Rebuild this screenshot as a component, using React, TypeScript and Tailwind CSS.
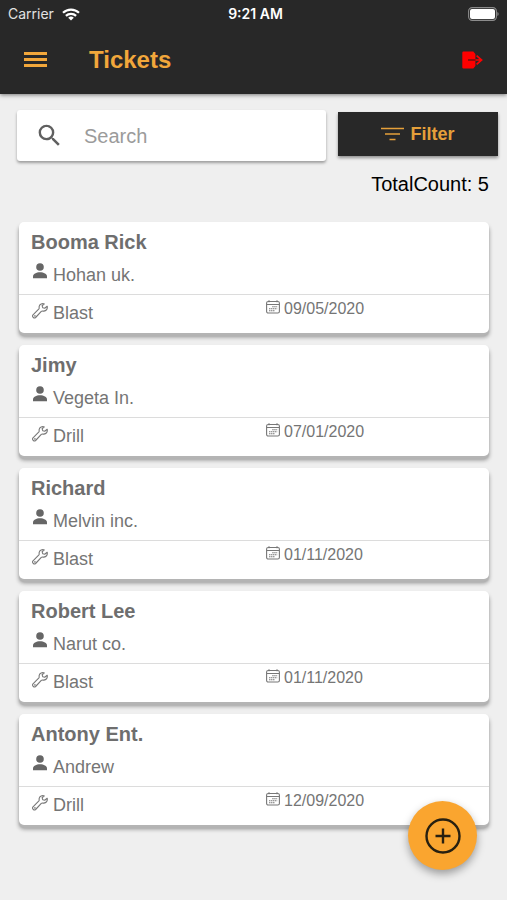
import { MdSearch } from "react-icons/md";

type Ticket = { name: string; company: string; kind: string; date: string };

const tickets: Ticket[] = [
  { name: "Booma Rick", company: "Hohan uk.", kind: "Blast", date: "09/05/2020" },
  { name: "Jimy", company: "Vegeta In.", kind: "Drill", date: "07/01/2020" },
  { name: "Richard", company: "Melvin inc.", kind: "Blast", date: "01/11/2020" },
  { name: "Robert Lee", company: "Narut co.", kind: "Blast", date: "01/11/2020" },
  { name: "Antony Ent.", company: "Andrew", kind: "Drill", date: "12/09/2020" },
];

function WifiIcon() {
  return (
    <svg width="18" height="13" viewBox="0 0 18 13" fill="none" stroke="#fff" strokeWidth="2.2" aria-hidden="true">
      <path d="M1 4.8a11.5 11.5 0 0 1 16 0" />
      <path d="M3.9 7.9a7.3 7.3 0 0 1 10.2 0" />
      <path d="M9 12.6 6.2 9.8a4 4 0 0 1 5.6 0z" fill="#fff" stroke="none" />
    </svg>
  );
}

function BatteryIcon() {
  return (
    <svg width="31" height="14" viewBox="0 0 31 14" aria-hidden="true">
      <rect x="0.6" y="0.6" width="27.8" height="12.8" rx="3.6" fill="none" stroke="#8c8c8c" strokeWidth="1.1" />
      <rect x="2" y="2" width="25" height="10" rx="2" fill="#fff" />
      <path d="M29.4 5c1.6.6 1.6 3.4 0 4z" fill="#8c8c8c" />
    </svg>
  );
}

function ExitIcon() {
  return (
    <svg width="21" height="18" viewBox="0 0 21 18" aria-hidden="true">
      <path d="M1.5 0.5h9.8L13.4 3v12l-2.1 2.5H1.5a1.2 1.2 0 0 1-1.2-1.2V1.7A1.2 1.2 0 0 1 1.5.5z" fill="#f00" />
      <path d="M6 9h7.5" stroke="#4a1010" strokeWidth="1.2" />
      <path d="M13.5 9H20M14.6 4.6 19.6 9l-5 4.4" fill="none" stroke="#f00" strokeWidth="1.7" />
    </svg>
  );
}

function PersonIcon() {
  return (
    <svg className="ml-px shrink-0" width="16" height="18" viewBox="0 0 16 18" fill="#666" aria-hidden="true">
      <circle cx="8" cy="5" r="3.8" />
      <path d="M1 16.3v-1.8c0-2.6 3.2-4.2 7-4.2s7 1.600 7 4.200v1.800z" />
    </svg>
  );
}

function WrenchIcon() {
  return (
    <svg
      className="mt-1 ml-px shrink-0"
      width="16"
      height="16"
      viewBox="0 0 16 16"
      fill="none"
      stroke="#777"
      strokeWidth="1.1"
      strokeLinejoin="round"
      aria-hidden="true"
    >
      <path d="M12.300.9C10.200.2 7.700 1.200 7.200 3.300c-.3 1.200.3 1.900-.3 2.600L1 11.900c-1.300 1.500.9 4 2.600 2.600L9.300 8.400c.7-.7 1.500-.1 2.600-.3 2.300-.4 3.700-2.500 3.300-4.900l-2.500 2-2-.5-.6-2z" />
      <circle cx="2.900" cy="12.800" r=".3" />
    </svg>
  );
}

function CalendarIcon() {
  return (
    <svg className="mt-px shrink-0" width="14" height="14" viewBox="0 0 14 14" fill="none" stroke="#777" aria-hidden="true">
      <rect x="0.600" y="1.500" width="12.800" height="11.500" rx="1.600" strokeWidth="1.100" />
      <path d="M.6 4.500h12.800M3 .3v2M11 .3v2" strokeWidth="1.100" />
      <path d="M6.200 6.800h5M3 8.800h8.200M3 10.800h5.600" strokeWidth="1.100" strokeDasharray="1.500 .5" />
    </svg>
  );
}

function TicketCard({ ticket }: { ticket: Ticket }) {
  return (
    <li className="rounded-[5px] bg-white text-[#757575] shadow-[0_3px_1px_#b4b4b4,0_4px_4px_rgba(0,0,0,0.4)]">
      <div className="h-[73px] border-b border-[#dcdcdc] px-3 pt-2">
        <h2 className="text-xl leading-6 font-bold text-[#6e6e6e]">{ticket.name}</h2>
        <p className="mt-2 flex items-start gap-[5px] text-lg leading-[26px]">
          <PersonIcon />
          {ticket.company}
        </p>
      </div>
      <div className="grid h-[38px] grid-cols-2 px-3 pt-1">
        <p className="flex items-start gap-[5px] text-lg leading-7">
          <WrenchIcon />
          {ticket.kind}
        </p>
        <p className="flex items-start gap-1 pl-3 text-base leading-5">
          <CalendarIcon />
          {ticket.date}
        </p>
      </div>
    </li>
  );
}

export default function App() {
  return (
    <div className="relative min-h-screen bg-[#efefef] font-['Liberation_Sans',Arial,sans-serif]">
      <header className="bg-[#282828] shadow-[0_1px_4px_rgba(0,0,0,0.5)]">
        <div className="grid h-7 grid-cols-3 items-center px-2 font-[Inter,sans-serif] text-sm text-white">
          <span className="flex items-center gap-2 text-[#e2e2e2]">
            Carrier <WifiIcon />
          </span>
          <span className="pl-1 text-center font-semibold">9:21 AM</span>
          <span className="flex justify-end">
            <BatteryIcon />
          </span>
        </div>
        <div className="flex h-[66px] items-center px-6 pb-[3px]">
          <button type="button" aria-label="Menu" className="flex w-[23px] flex-col gap-[3px]">
            <span className="h-[3px] bg-[#f2a73b]" />
            <span className="h-[3px] bg-[#f2a73b]" />
            <span className="h-[3px] bg-[#f2a73b]" />
          </button>
          <h1 className="ml-[42px] flex-1 text-2xl font-bold text-[#f2a73b]">Tickets</h1>
          <button type="button" aria-label="Log out">
            <ExitIcon />
          </button>
        </div>
      </header>

      <main>
        <div className="flex items-start gap-3 pt-4 pr-[9px] pl-[17px]">
          <label className="flex h-[51px] min-w-0 flex-1 items-center rounded-[3px] bg-white pl-[18px] shadow-[0_2px_3px_rgba(0,0,0,0.35)]">
            <MdSearch className="shrink-0" size={29} color="#606060" aria-hidden="true" />
            <input
              type="search"
              aria-label="Search"
              placeholder="Search"
              className="ml-5 w-full min-w-0 bg-transparent text-xl text-[#333] outline-none placeholder:text-[#9b9b9b]"
            />
          </label>
          <button
            type="button"
            className="mt-[2px] flex h-11 w-40 items-center justify-center gap-[6px] bg-[#282828] text-lg font-bold text-[#e5a03a] shadow-[0_2px_3px_rgba(0,0,0,0.4)]"
          >
            <svg width="23" height="14" viewBox="0 0 23 14" stroke="currentColor" strokeWidth="1.6" aria-hidden="true">
              <path d="M0 1.500h23M4 7h15M8.500 12.500h6" />
            </svg>
            Filter
          </button>
        </div>
        <p className="mt-2 pr-[18px] text-right text-xl leading-[30px] text-black">TotalCount: 5</p>
        <ul className="mt-[23px] flex flex-col gap-3 pr-[18px] pb-16 pl-[19px]">
          {tickets.map((ticket) => (
            <TicketCard key={ticket.name} ticket={ticket} />
          ))}
        </ul>
      </main>

      <button
        type="button"
        aria-label="Add ticket"
        className="absolute right-[30px] bottom-[30px] flex size-[69px] items-center justify-center rounded-full bg-[#faa52f] shadow-[0_4px_8px_rgba(0,0,0,0.35)]"
      >
        <svg width="36" height="36" viewBox="0 0 36 36" fill="none" stroke="#282010" strokeWidth="2.400" aria-hidden="true">
          <circle cx="18" cy="18" r="16.500" />
          <path d="M18 10.500v15M10.500 18h15" />
        </svg>
      </button>
    </div>
  );
}
